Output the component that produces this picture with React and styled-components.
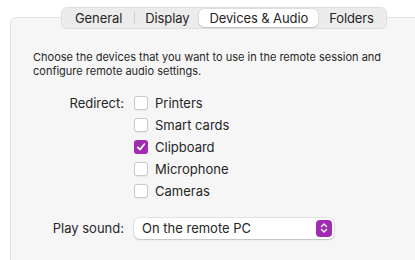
import React, { useState } from "react";
import styled, { createGlobalStyle } from "styled-components";

const Global = createGlobalStyle`
  body {
    margin: 0;
    background: #ffffff;
    font-family: Inter, "Noto Sans", "Liberation Sans", sans-serif;
    color: #262626;
    -webkit-font-smoothing: antialiased;
  }
`;

const Window = styled.div`
  width: 415px;
  height: 260px;
  overflow: hidden;
  position: relative;
`;

const TabBar = styled.div`
  position: absolute;
  top: 7px;
  left: 61px;
  display: flex;
  align-items: center;
  height: 20px;
  padding: 0 1px;
  background: #ececec;
  border: 1px solid #dedede;
  border-radius: 6px;
  z-index: 1;
`;

const Tab = styled.div`
  position: relative;
  height: 18px;
  display: flex;
  align-items: center;
  padding: 0 ${(p) => p.$pad}px;
  font-size: 13px;
  letter-spacing: -0.1px;
  color: #262626;
  border-radius: 5px;
  background: ${(p) => (p.$active ? "#ffffff" : "transparent")};
  box-shadow: ${(p) =>
    p.$active ? "0 0 0 0.5px rgba(0,0,0,0.12), 0 1px 1px rgba(0,0,0,0.12)" : "none"};
`;

const Sep = styled.div`
  width: 1px;
  height: 12px;
  background: #cfcfcf;
`;

const Panel = styled.div`
  margin: 17px 0 0 10px;
  width: 440px;
  height: 260px;
  box-sizing: border-box;
  background: #f6f6f6;
  border: 1px solid #e2e2e2;
  border-radius: 6px;
  padding: 32px 0 0 22px;
`;

const Intro = styled.p`
  margin: 0;
  width: 362px;
  font-size: 11px;
  line-height: 14px;
  color: #262626;
`;

const Form = styled.div`
  display: grid;
  grid-template-columns: 91px auto;
  column-gap: 10px;
  margin-top: 14px;
`;

const Label = styled.div`
  font-size: 13px;
  text-align: right;
  line-height: 22px;
  color: #262626;
`;

const Options = styled.div`
  display: flex;
  flex-direction: column;
`;

const Option = styled.label`
  display: flex;
  align-items: center;
  gap: 7px;
  height: 22px;
  font-size: 13px;
  color: #262626;
`;

const Box = styled.span`
  width: 14px;
  height: 14px;
  box-sizing: border-box;
  border-radius: 3px;
  display: flex;
  align-items: center;
  justify-content: center;
  background: ${(p) => (p.$on ? "#a22bb4" : "#ffffff")};
  border: ${(p) => (p.$on ? "none" : "1px solid #c9c9c9")};
  box-shadow: ${(p) => (p.$on ? "none" : "0 0.5px 1px rgba(0,0,0,0.06)")};
`;

const SoundRow = styled.div`
  display: grid;
  grid-template-columns: 91px auto;
  column-gap: 10px;
  align-items: center;
  margin-top: 15px;
`;

const Popup = styled.div`
  width: 200px;
  height: 21px;
  box-sizing: border-box;
  display: flex;
  align-items: center;
  justify-content: space-between;
  padding: 0 2px 0 8px;
  background: #ffffff;
  border-radius: 5px;
  box-shadow: 0 0 0 0.5px rgba(0,0,0,0.15), 0 1px 1.5px rgba(0,0,0,0.15);
  font-size: 13px;
  color: #262626;
`;

const Stepper = styled.span`
  width: 16px;
  height: 17px;
  border-radius: 4px;
  background: #a22bb4;
  display: flex;
  align-items: center;
  justify-content: center;
`;

const tabs = [
  { name: "General", pad: 12 },
  { name: "Display", pad: 10 },
  { name: "Devices & Audio", pad: 10 },
  { name: "Folders", pad: 11 },
];

const devices = ["Printers", "Smart cards", "Clipboard", "Microphone", "Cameras"];

export default function App() {
  const [checked, setChecked] = useState({ Clipboard: true });
  const active = "Devices & Audio";

  return (
    <Window>
      <Global />
      <TabBar>
        {tabs.map((t, i) => {
          const next = tabs[i + 1];
          const showSep =
            next && t.name !== active && next.name !== active;
          return (
            <React.Fragment key={t.name}>
              <Tab $active={t.name === active} $pad={t.pad}>
                {t.name}
              </Tab>
              {showSep && <Sep />}
            </React.Fragment>
          );
        })}
      </TabBar>
      <Panel>
        <Intro>
          Choose the devices that you want to use in the remote session and
          configure remote audio settings.
        </Intro>
        <Form>
          <Label>Redirect:</Label>
          <Options>
            {devices.map((d) => (
              <Option
                key={d}
                onClick={() => setChecked((c) => ({ ...c, [d]: !c[d] }))}
              >
                <Box $on={checked[d]}>
                  {checked[d] && (
                    <svg width="10" height="10" viewBox="0 0 10 10">
                      <path
                        d="M1.8 5.3 L4 7.6 L8.3 2.2"
                        fill="none"
                        stroke="#fff"
                        strokeWidth="1.7"
                        strokeLinecap="round"
                        strokeLinejoin="round"
                      />
                    </svg>
                  )}
                </Box>
                {d}
              </Option>
            ))}
          </Options>
        </Form>
        <SoundRow>
          <Label>Play sound:</Label>
          <Popup>
            On the remote PC
            <Stepper>
              <svg width="8" height="12" viewBox="0 0 8 12">
                <path
                  d="M1.5 4.5 L4 2 L6.5 4.5 M1.5 7.5 L4 10 L6.5 7.5"
                  fill="none"
                  stroke="#fff"
                  strokeWidth="1.4"
                  strokeLinecap="round"
                  strokeLinejoin="round"
                />
              </svg>
            </Stepper>
          </Popup>
        </SoundRow>
      </Panel>
    </Window>
  );
}
